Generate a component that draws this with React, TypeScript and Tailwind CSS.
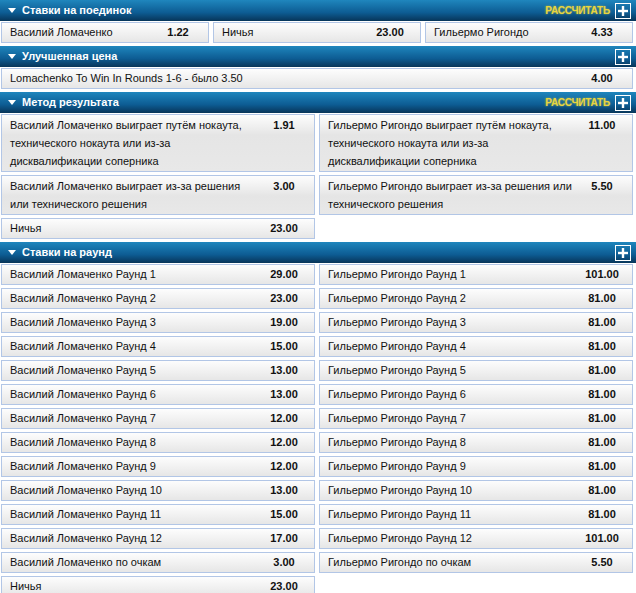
import React from 'react';

type Bet = { name: string; odds: string };

const FONT = { fontFamily: '"Liberation Sans", Arial, sans-serif' };

function Header({ title, calc }: { title: string; calc?: boolean }) {
  return (
    <div className="h-[21px] flex items-center bg-[linear-gradient(#1f86bd,#0d5c93_60%,#073559)] text-white">
      <span className="ml-[8px] w-0 h-0 border-l-[4px] border-r-[4px] border-t-[5px] border-l-transparent border-r-transparent border-t-white" />
      <span className="ml-[6px] text-[11px] font-bold leading-none">{title}</span>
      <div className="ml-auto mr-[5px] flex items-center gap-[5px]">
        {calc && (
          <span className="text-[10px] font-bold tracking-[-0.2px] text-[#e8d53e] [text-shadow:0_0_2px_rgba(232,213,62,0.7)]">
            РАССЧИТАТЬ
          </span>
        )}
        <span className="w-[16px] h-[16px] border border-white flex items-center justify-center">
          <svg width="10" height="10" viewBox="0 0 10 10">
            <rect x="3.8" y="0" width="2.4" height="10" fill="white" />
            <rect x="0" y="3.8" width="10" height="2.4" fill="white" />
          </svg>
        </span>
      </div>
    </div>
  );
}

function Cell({ bet, multi }: { bet: Bet; multi?: boolean }) {
  return (
    <div
      className={
        'flex border border-[#b2c6e6] bg-[linear-gradient(#fdfdfd,#e5e5e5_20px,#e8e8e8)] text-[11px] text-[#111] pl-[8px] pr-[5px] ' +
        (multi ? 'items-start leading-[18px] py-[1px]' : 'items-center h-[21px] leading-[19px]')
      }
    >
      <span className="flex-1 min-w-0">{bet.name}</span>
      <span className="w-[50px] shrink-0 text-center font-bold">{bet.odds}</span>
    </div>
  );
}

const rounds = [
  ['29.00', '101.00'],
  ['23.00', '81.00'],
  ['19.00', '81.00'],
  ['15.00', '81.00'],
  ['13.00', '81.00'],
  ['13.00', '81.00'],
  ['12.00', '81.00'],
  ['12.00', '81.00'],
  ['12.00', '81.00'],
  ['13.00', '81.00'],
  ['15.00', '81.00'],
  ['17.00', '101.00'],
];

export default function App() {
  return (
    <div className="w-[636px] bg-white" style={FONT}>
      {/* Ставки на поединок */}
      <div className="mb-[3px]">
        <Header title="Ставки на поединок" calc />
        <div className="mt-[1px] ml-[1px] w-[632px] grid grid-cols-3 gap-[4px]">
          <Cell bet={{ name: 'Василий Ломаченко', odds: '1.22' }} />
          <Cell bet={{ name: 'Ничья', odds: '23.00' }} />
          <Cell bet={{ name: 'Гильермо Ригондо', odds: '4.33' }} />
        </div>
      </div>

      {/* Улучшенная цена */}
      <div className="mb-[3px]">
        <Header title="Улучшенная цена" />
        <div className="mt-[1px] ml-[1px] w-[632px]">
          <Cell bet={{ name: 'Lomachenko To Win In Rounds 1-6 - было 3.50', odds: '4.00' }} />
        </div>
      </div>

      {/* Метод результата */}
      <div className="mb-[3px]">
        <Header title="Метод результата" calc />
        <div className="mt-[1px] ml-[1px] w-[632px] grid grid-cols-2 gap-x-[4px] gap-y-[3px] items-start">
          <Cell
            multi
            bet={{
              name: 'Василий Ломаченко выиграет путём нокаута, технического нокаута или из-за дисквалификации соперника',
              odds: '1.91',
            }}
          />
          <Cell
            multi
            bet={{
              name: 'Гильермо Ригондо выиграет путём нокаута, технического нокаута или из-за дисквалификации соперника',
              odds: '11.00',
            }}
          />
          <Cell multi bet={{ name: 'Василий Ломаченко выиграет из-за решения или технического решения', odds: '3.00' }} />
          <Cell multi bet={{ name: 'Гильермо Ригондо выиграет из-за решения или технического решения', odds: '5.50' }} />
          <Cell bet={{ name: 'Ничья', odds: '23.00' }} />
        </div>
      </div>

      {/* Ставки на раунд */}
      <div>
        <Header title="Ставки на раунд" />
        <div className="mt-[1px] ml-[1px] w-[632px] grid grid-cols-2 gap-x-[4px] gap-y-[3px]">
          {rounds.map((r, i) => (
            <React.Fragment key={i}>
              <Cell bet={{ name: `Василий Ломаченко Раунд ${i + 1}`, odds: r[0] }} />
              <Cell bet={{ name: `Гильермо Ригондо Раунд ${i + 1}`, odds: r[1] }} />
            </React.Fragment>
          ))}
          <Cell bet={{ name: 'Василий Ломаченко по очкам', odds: '3.00' }} />
          <Cell bet={{ name: 'Гильермо Ригондо по очкам', odds: '5.50' }} />
          <Cell bet={{ name: 'Ничья', odds: '23.00' }} />
        </div>
      </div>
    </div>
  );
}
